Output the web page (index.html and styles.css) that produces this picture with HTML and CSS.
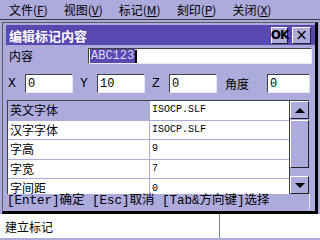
FILE: index.html
```html
<!DOCTYPE html>
<html>
<head>
    <link rel="stylesheet" href="styles.css">
</head>
<body>
    <div class="menubar">
        <span class="menu">文件(<u>F</u>)</span>
        <span class="menu">视图(<u>V</u>)</span>
        <span class="menu">标记(<u>M</u>)</span>
        <span class="menu">刻印(<u>P</u>)</span>
        <span class="menu">关闭(<u>X</u>)</span>
    </div>

    <div class="dialog">
        <div class="titlebar">
            <span class="title">编辑标记内容</span>
            <span class="tbtn ok">OK</span>
            <span class="tbtn close">×</span>
        </div>

        <div class="row name-row">
            <span class="label">内容</span>
            <div class="field wide"><span class="selected">ABC123</span><span class="caret"></span></div>
        </div>

        <div class="row coord-row">
            <span class="label mono first">X</span>
            <div class="field small">0</div>
            <span class="label mono">Y</span>
            <div class="field small">10</div>
            <span class="label mono">Z</span>
            <div class="field small">0</div>
            <span class="label angle">角度</span>
            <div class="field last">0</div>
        </div>

        <div class="table">
            <div class="rows">
                <div class="trow">
                    <div class="cell key active">英文字体</div>
                    <div class="cell val">ISOCP.SLF</div>
                </div>
                <div class="trow">
                    <div class="cell key">汉字字体</div>
                    <div class="cell val">ISOCP.SLF</div>
                </div>
                <div class="trow">
                    <div class="cell key">字高</div>
                    <div class="cell val">9</div>
                </div>
                <div class="trow">
                    <div class="cell key">字宽</div>
                    <div class="cell val">7</div>
                </div>
                <div class="trow partial">
                    <div class="cell key">字间距</div>
                    <div class="cell val">0</div>
                </div>
            </div>
            <div class="scrollbar">
                <div class="sbtn"><span class="arrow up"></span></div>
                <div class="thumb"></div>
                <div class="track"></div>
                <div class="sbtn"><span class="arrow down"></span></div>
            </div>
        </div>

        <div class="hint">[Enter]确定 [Esc]取消 [Tab&amp;方向键]选择</div>
    </div>

    <div class="statusbar">
        <div class="pane first">建立标记</div>
        <div class="pane"></div>
    </div>
    <div class="bottom"></div>
</body>
</html>
```

FILE: styles.css
```css
body {
    margin: 0;
    width: 320px;
    height: 240px;
    overflow: hidden;
    background-color: #adaadc;
    font-family: "Noto Sans CJK SC", sans-serif;
    font-size: 12px;
    color: #000;
    display: flex;
    flex-direction: column;
}
.menubar {
    height: 19px;
    border-bottom: 1px solid #3c3c3c;
    display: flex;
    align-items: center;
    padding-left: 9px;
    gap: 16px;
    line-height: 1;
}
.menu u {
    text-decoration: underline;
}
.dialog {
    margin: 2px 2px 0 2px;
    height: 186px;
    border-left: 1px solid #5c5c5c;
    border-top: 1px solid #5c5c5c;
    border-right: 3px solid #000;
    border-bottom: 3px solid #000;
    padding: 2px 0 0 3px;
    display: flex;
    flex-direction: column;
    box-sizing: content-box;
}
.titlebar {
    height: 20px;
    background-color: #5848b0;
    display: flex;
    align-items: center;
    padding-left: 3px;
    padding-right: 4px;
    gap: 4px;
}
.title {
    color: #fff;
    font-weight: bold;
    font-size: 13px;
    flex: 1;
}
.tbtn {
    width: 17px;
    height: 17px;
    background-color: #adaadc;
    border-top: 1px solid #fff;
    border-left: 1px solid #fff;
    border-right: 1px solid #222;
    border-bottom: 1px solid #222;
    box-sizing: border-box;
    display: flex;
    align-items: center;
    justify-content: center;
    line-height: 1;
}
.tbtn.ok {
    font-family: "DejaVu Sans", sans-serif;
    font-weight: bold;
    font-size: 12px;
    letter-spacing: -1px;
}
.tbtn.close {
    width: 19px;
    font-family: "DejaVu Sans", sans-serif;
    font-size: 15px;
}
.row {
    display: flex;
    align-items: center;
}
.name-row {
    margin-top: 3px;
    height: 16px;
    margin-right: 3px;
}
.name-row .label {
    width: 79px;
    padding-left: 3px;
}
.label {
    line-height: 1;
}
.mono {
    font-family: "Liberation Mono", monospace;
    font-size: 13px;
}
.field {
    background-color: #fff;
    height: 16px;
    border-top: 1px solid #404040;
    border-left: 1px solid #404040;
    border-right: 1px solid #e8e8f4;
    border-bottom: 1px solid #e8e8f4;
    box-sizing: border-box;
    display: flex;
    align-items: center;
    padding-left: 2px;
    font-family: "Liberation Mono", monospace;
    font-size: 12px;
}
.field.wide {
    flex: 1;
    padding-left: 1px;
}
.selected {
    background-color: #5848b0;
    color: #dcdaf6;
    padding: 0 1px;
}
.caret {
    width: 2px;
    height: 13px;
    background-color: #000;
}
.coord-row {
    margin-top: 10px;
    height: 19px;
    margin-right: 5px;
}
.coord-row .field {
    height: 19px;
}
.coord-row .label {
    width: 24px;
    padding-left: 7px;
    box-sizing: border-box;
}
.coord-row .label.first {
    width: 19px;
    padding-left: 2px;
}
.field.small {
    width: 48px;
}
.coord-row .label.angle {
    width: 50px;
    padding-left: 8px;
}
.field.last {
    flex: 1;
}
.table {
    margin-top: 7px;
    margin-left: 1px;
    margin-right: 6px;
    height: 93px;
    display: flex;
    border-top: 1px solid #404040;
    border-left: 1px solid #404040;
    background-color: #fff;
}
.rows {
    flex: 1;
    overflow: hidden;
}
.trow {
    display: flex;
    height: 19.5px;
    border-bottom: 1px solid #adaadc;
    box-sizing: border-box;
}
.trow.partial {
    height: 15px;
    overflow: hidden;
    border-bottom: none;
}
.cell {
    display: flex;
    align-items: center;
    padding-left: 2px;
    line-height: 1;
}
.trow.partial .cell {
    align-items: flex-end;
}
.cell.key {
    width: 139px;
    border-right: 1px solid #adaadc;
    font-size: 12px;
}
.cell.active {
    background-color: #adaadc;
}
.cell.val {
    flex: 1;
    font-family: "Liberation Mono", monospace;
    font-size: 10px;
}
.scrollbar {
    width: 19px;
    display: flex;
    flex-direction: column;
    background-color: #adaadc;
    border-left: 1px solid #404040;
}
.sbtn, .thumb {
    background-color: #adaadc;
    border-top: 1px solid #fff;
    border-left: 1px solid #fff;
    border-right: 1px solid #222;
    border-bottom: 1px solid #222;
    box-sizing: border-box;
}
.sbtn {
    height: 18px;
    display: flex;
    align-items: center;
    justify-content: center;
}
.thumb {
    height: 48px;
    margin-top: 1px;
}
.track {
    flex: 1;
}
.arrow {
    width: 0;
    height: 0;
    border-left: 5px solid transparent;
    border-right: 5px solid transparent;
}
.arrow.up {
    border-bottom: 5px solid #000;
}
.arrow.down {
    border-top: 5px solid #000;
}
.hint {
    height: 15px;
    display: flex;
    align-items: center;
    padding-left: 1px;
    margin-right: 5px;
    border-right: 1px solid #e8e8f4;
    font-family: "Liberation Mono", "Noto Sans CJK SC", monospace;
    font-size: 12.5px;
    line-height: 1;
    white-space: nowrap;
}
.statusbar {
    height: 24px;
    background-color: #fff;
    display: flex;
}
.pane {
    display: flex;
    align-items: center;
    padding-left: 5px;
    flex: 1;
}
.pane.first {
    flex: 0 0 214px;
    border-right: 1px solid #808080;
}
.bottom {
    flex: 1;
    background-color: #adaadc;
}
```
